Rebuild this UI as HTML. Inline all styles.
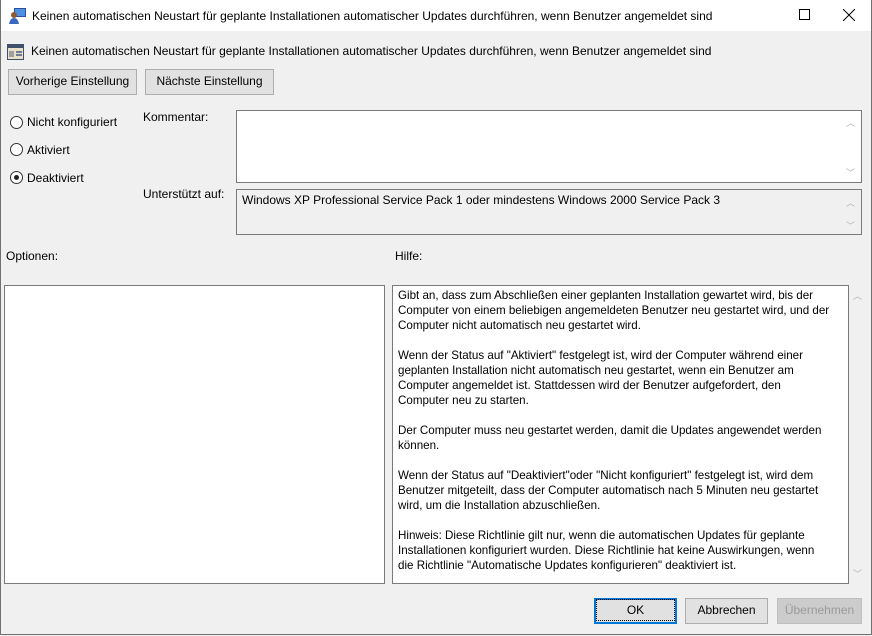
<!DOCTYPE html>
<html><head><meta charset="utf-8"><style>
*{margin:0;padding:0;box-sizing:border-box}
body{width:872px;height:636px;background:#f0f0f0;font-family:"Liberation Sans",sans-serif;font-size:12px;color:#000;position:relative;overflow:hidden}
.a{position:absolute;white-space:nowrap}
.win{position:absolute;left:0;top:0;width:872px;height:635px;border:1px solid #707070;border-top:none}
.btn{position:absolute;background:#e1e1e1;border:1px solid #adadad;text-align:center;line-height:23px;font-size:12px}
.box{position:absolute;border:1px solid #7a7a7a;background:#fff}
.radio{position:absolute;width:13px;height:13px;border:1px solid #333;border-radius:50%;background:#fff}
.arr{position:absolute;color:#b0b0b0;font-size:9px}
.help div{height:15px;white-space:nowrap}
</style></head><body>
<div style="position:absolute;left:0;top:0;width:872px;height:31px;background:#fff"></div>
<div class="win"></div>
<svg class="a" style="left:9px;top:7px" width="18" height="18" viewBox="0 0 18 18">
<rect x="5" y="1" width="12" height="9" fill="#2a4fa0"/><rect x="6" y="2" width="10" height="7" fill="#4d8fe0"/>
<circle cx="5" cy="8" r="3" fill="#8a5a30"/><path d="M0 17 Q1 11 5 11 Q9 11 10 17Z" fill="#3a6ac0"/></svg>
<div class="a" style="left:32px;top:9px;font-size:12px">Keinen automatischen Neustart für geplante Installationen automatischer Updates durchführen, wenn Benutzer angemeldet sind</div>
<div class="a" style="left:799px;top:9px;width:11px;height:11px;border:1px solid #000"></div>
<svg class="a" style="left:843px;top:9px" width="12" height="12"><path d="M0 0L12 12M12 0L0 12" stroke="#000" stroke-width="1"/></svg>
<svg class="a" style="left:7px;top:44px" width="17" height="16" viewBox="0 0 17 16">
<rect x="0" y="0" width="17" height="16" fill="#40506a"/><rect x="1" y="4" width="15" height="11" fill="#e8e0c8"/>
<rect x="2" y="7" width="5" height="6" fill="#a0a0a0"/><rect x="9" y="7" width="6" height="2" fill="#6a7a90"/><rect x="9" y="10" width="6" height="2" fill="#6a7a90"/></svg>
<div class="a" style="left:31px;top:44px">Keinen automatischen Neustart für geplante Installationen automatischer Updates durchführen, wenn Benutzer angemeldet sind</div>
<div class="btn" style="left:8px;top:69px;width:129px;height:26px">Vorherige Einstellung</div>
<div class="btn" style="left:145px;top:69px;width:129px;height:26px">Nächste Einstellung</div>
<div class="radio" style="left:10px;top:116px"></div><div class="a" style="left:27px;top:115px">Nicht konfiguriert</div>
<div class="radio" style="left:10px;top:143px"></div><div class="a" style="left:27px;top:143px">Aktiviert</div>
<div class="radio" style="left:10px;top:171px"><div style="position:absolute;left:3px;top:3px;width:5px;height:5px;border-radius:50%;background:#222"></div></div><div class="a" style="left:27px;top:171px">Deaktiviert</div>
<div class="a" style="left:143px;top:110px">Kommentar:</div>
<div class="box" style="left:236px;top:110px;width:626px;height:73px"></div>
<div class="arr" style="left:846px;top:116px">︿</div><div class="arr" style="left:846px;top:166px">﹀</div>
<div class="a" style="left:143px;top:187px">Unterstützt auf:</div>
<div class="box" style="left:236px;top:189px;width:626px;height:46px;background:#f0f0f0"></div>
<div class="a" style="left:242px;top:193px">Windows XP Professional Service Pack 1 oder mindestens Windows 2000 Service Pack 3</div>
<div class="arr" style="left:846px;top:196px">︿</div><div class="arr" style="left:846px;top:219px">﹀</div>
<div class="a" style="left:6px;top:249px">Optionen:</div>
<div class="a" style="left:395px;top:249px">Hilfe:</div>
<div class="box" style="left:4px;top:285px;width:381px;height:299px"></div>
<div class="box help" style="left:392px;top:285px;width:457px;height:299px;padding:2px 0 0 5px;font-size:11.6px;line-height:15px;overflow:hidden">
<div>Gibt an, dass zum Abschließen einer geplanten Installation gewartet wird, bis der</div>
<div>Computer von einem beliebigen angemeldeten Benutzer neu gestartet wird, und der</div>
<div>Computer nicht automatisch neu gestartet wird.</div><div></div>
<div>Wenn der Status auf "Aktiviert" festgelegt ist, wird der Computer während einer</div>
<div>geplanten Installation nicht automatisch neu gestartet, wenn ein Benutzer am</div>
<div>Computer angemeldet ist. Stattdessen wird der Benutzer aufgefordert, den</div>
<div>Computer neu zu starten.</div><div></div>
<div>Der Computer muss neu gestartet werden, damit die Updates angewendet werden</div>
<div>können.</div><div></div>
<div>Wenn der Status auf "Deaktiviert"oder "Nicht konfiguriert" festgelegt ist, wird dem</div>
<div>Benutzer mitgeteilt, dass der Computer automatisch nach 5 Minuten neu gestartet</div>
<div>wird, um die Installation abzuschließen.</div><div></div>
<div>Hinweis: Diese Richtlinie gilt nur, wenn die automatischen Updates für geplante</div>
<div>Installationen konfiguriert wurden. Diese Richtlinie hat keine Auswirkungen, wenn</div>
<div>die Richtlinie "Automatische Updates konfigurieren" deaktiviert ist.</div>
</div>
<div class="arr" style="left:853px;top:289px">︿</div><div class="arr" style="left:853px;top:567px">﹀</div>
<div class="btn" style="left:594px;top:598px;width:83px;height:26px;border:2px solid #0078d7;line-height:21px"><span style="outline:1px dotted #000;outline-offset:2px;display:inline-block;width:73px;line-height:16px">OK</span></div>
<div class="btn" style="left:685px;top:598px;width:83px;height:26px">Abbrechen</div>
<div class="btn" style="left:777px;top:598px;width:85px;height:26px;background:#ccc;border-color:#bfbfbf;color:#9a9a9a">Übernehmen</div>
</body></html>
